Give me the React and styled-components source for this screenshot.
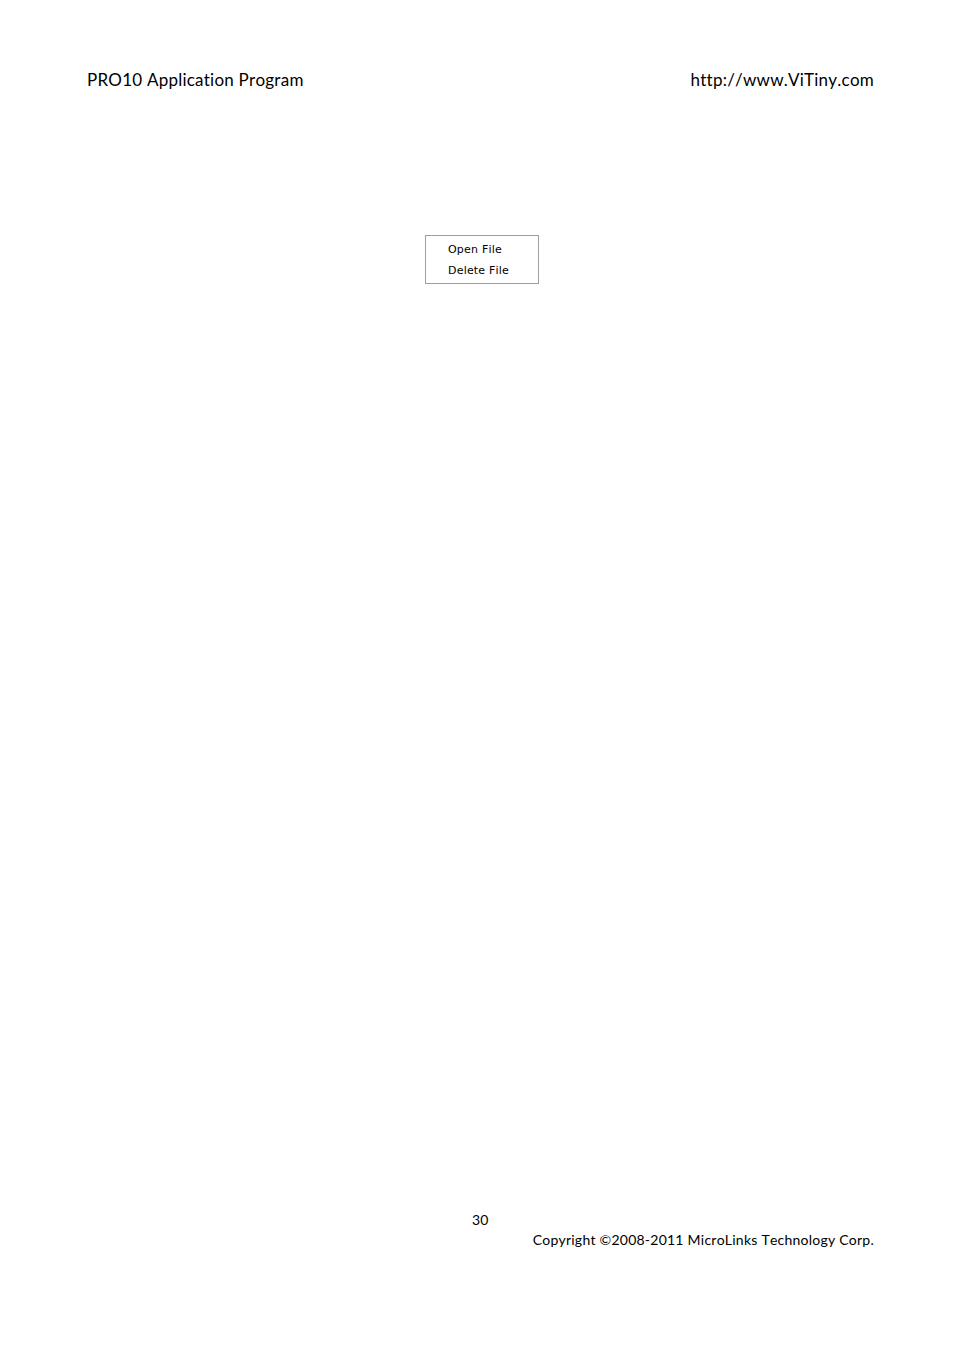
import React from "react";
import styled, { createGlobalStyle } from "styled-components";

const Global = createGlobalStyle`
  html, body { margin: 0; padding: 0; background: #ffffff; }
  body {
    font-family: Lato, "Open Sans", sans-serif;
    color: #000;
    font-variant-ligatures: none;
    font-kerning: none;
  }
`;

const Page = styled.div`
  width: 954px;
  height: 1350px;
  box-sizing: border-box;
  padding: 70px 80px 100px 87px;
  display: flex;
  flex-direction: column;
`;

const Header = styled.header`
  display: flex;
  justify-content: space-between;
  align-items: center;
  font-size: 17px;
  line-height: 20px;
  letter-spacing: 0.23px;
`;

const Content = styled.main`
  flex: 1;
  display: flex;
  flex-direction: column;
  padding-top: 145px;
  padding-left: 338px;
`;

const Menu = styled.ul`
  list-style: none;
  margin: 0;
  padding: 3px 0 4px 0;
  width: 114px;
  height: 49px;
  box-sizing: border-box;
  border: 1px solid #a0a0a0;
  font-family: "DejaVu Sans", Verdana, sans-serif;
  font-size: 11px;
  letter-spacing: 0.2px;
  color: #000;
`;

const MenuItem = styled.li`
  padding-left: 22px;
  height: 21px;
  line-height: 21px;
  white-space: nowrap;
`;

const Footer = styled.footer`
  display: flex;
  flex-direction: column;
  font-size: 14px;
  line-height: 20px;
  letter-spacing: 0.24px;
`;

const PageNumber = styled.div`
  padding-left: 385px;
`;

const Copyright = styled.div`
  text-align: right;
`;

export default function App() {
  return (
    <>
      <Global />
      <Page>
        <Header>
          <span>PRO10 Application Program</span>
          <span>http://www.ViTiny.com</span>
        </Header>
        <Content>
          <Menu>
            <MenuItem>Open File</MenuItem>
            <MenuItem>Delete File</MenuItem>
          </Menu>
        </Content>
        <Footer>
          <PageNumber>30</PageNumber>
          <Copyright>Copyright ©2008-2011 MicroLinks Technology Corp.</Copyright>
        </Footer>
      </Page>
    </>
  );
}
